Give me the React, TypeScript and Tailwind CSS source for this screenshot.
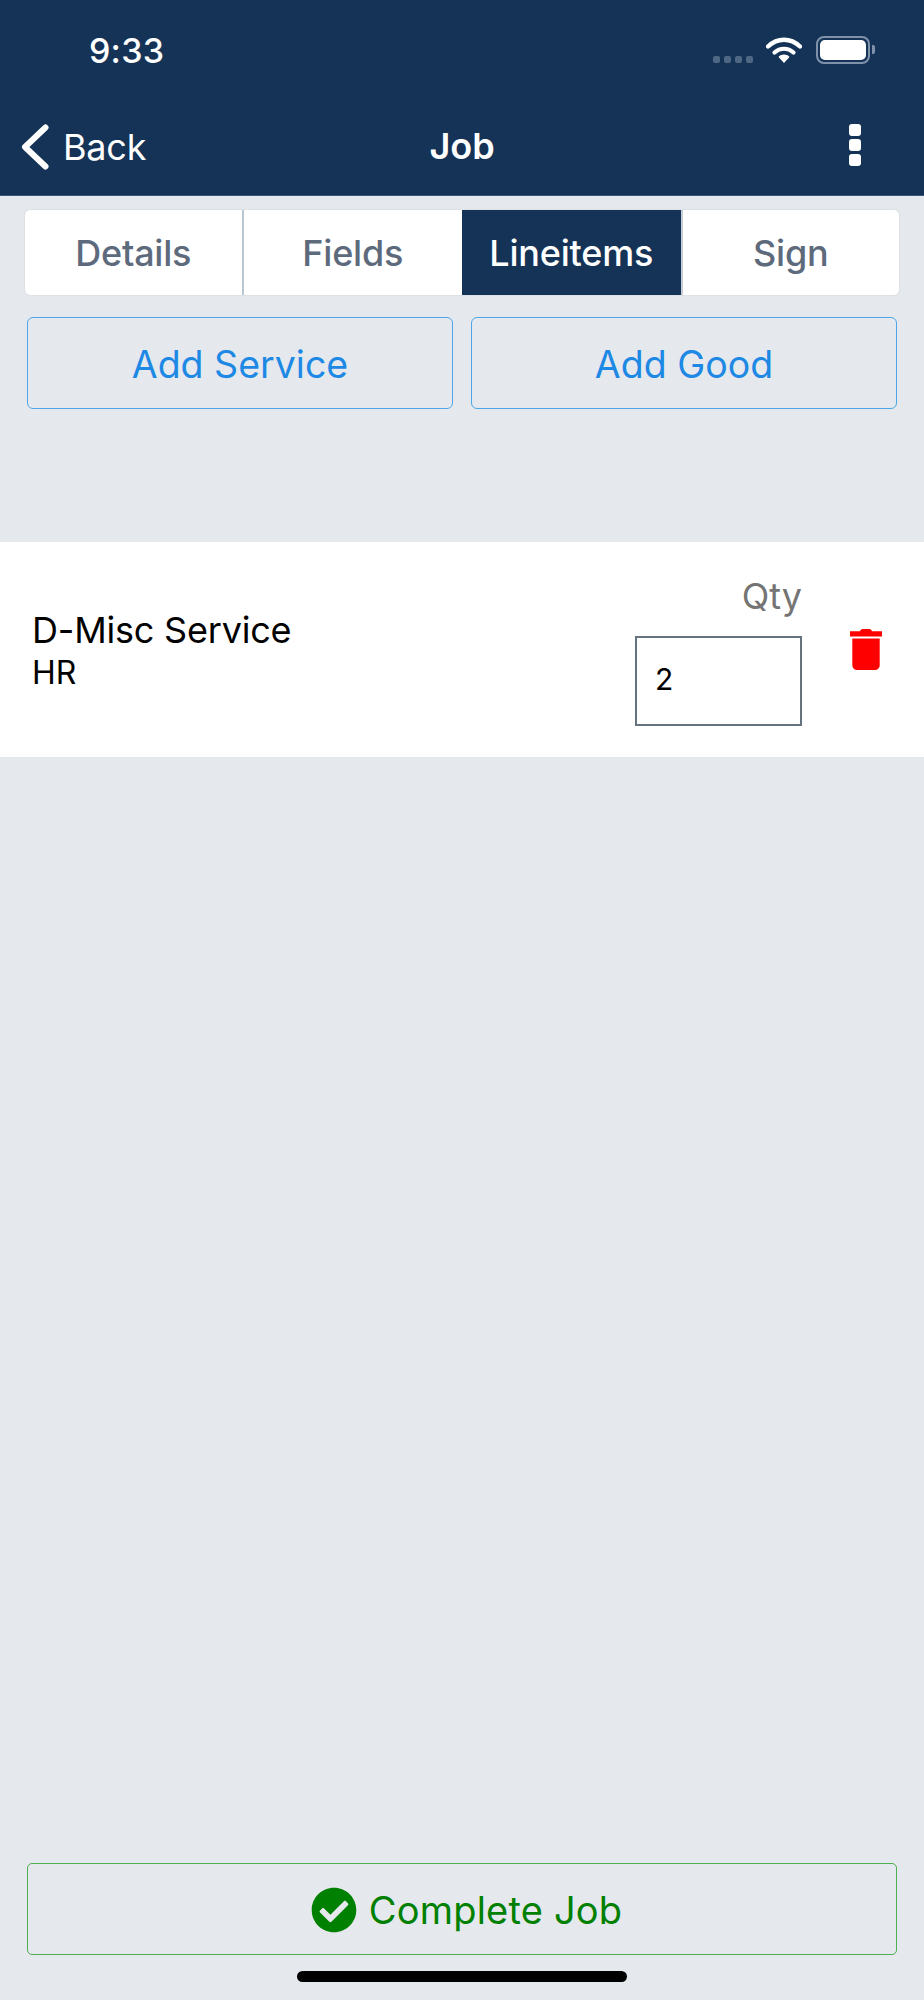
import { FaCheckCircle } from 'react-icons/fa';

const tabs = ['Details', 'Fields', 'Lineitems', 'Sign'];

function StatusBar() {
  return (
    <div className="flex h-[100px] items-start justify-between pl-[89px] pr-[49px] pt-[30px]">
      <span className="text-[34px] font-medium leading-[42px] tracking-[0.2px] text-white">9:33</span>
      <div className="flex items-start pt-[6px]">
        <div className="mt-[20px] flex gap-[4px]">
          {[0, 1, 2, 3].map((i) => (
            <div key={i} className="h-[7px] w-[7px] rounded-[2px] bg-[#4d6784]" />
          ))}
        </div>
        <svg className="ml-[13px] mt-[1px]" width="36" height="26" viewBox="0 0 36 26" fill="none">
          <path d="M2 9.5C11.5 0.5 24.5 0.5 34 9.5" stroke="white" strokeWidth="4.4" strokeLinecap="round" />
          <path d="M8.5 15.5C14 10.5 22 10.5 27.5 15.5" stroke="white" strokeWidth="4.2" strokeLinecap="round" />
          <path d="M12.5 20C15.5 16.8 20.5 16.8 23.5 20L18 26Z" fill="white" />
        </svg>
        <div className="ml-[14px] flex h-[28px] w-[54px] rounded-[8px] border-2 border-[#7f92a9] p-[2px]">
          <div className="flex-1 rounded-[5px] bg-white" />
        </div>
        <div className="ml-[2px] mt-[9px] h-[9px] w-[3px] rounded-r-[2px] bg-[#7f92a9]" />
      </div>
    </div>
  );
}

function NavBar() {
  return (
    <div className="relative flex h-[95px] items-start justify-between pl-[21px] pr-[63px] pt-[24px]">
      <div className="flex items-center">
        <svg width="28" height="46" viewBox="0 0 28 46" fill="none">
          <path d="M24.5 3.5L4 23L24.5 42.5" stroke="white" strokeWidth="6" strokeLinecap="round" strokeLinejoin="round" />
        </svg>
        <span className="ml-[14px] text-[36px] leading-[44px] tracking-[-0.2px] text-white">Back</span>
      </div>
      <span className="absolute left-0 right-0 top-[24px] text-center text-[36px] font-semibold leading-[44px] text-white">
        Job
      </span>
      <div className="flex flex-col gap-[3px]">
        <div className="h-[12px] w-[12px] rounded-[3px] bg-white" />
        <div className="h-[12px] w-[12px] rounded-[3px] bg-white" />
        <div className="h-[12px] w-[12px] rounded-[3px] bg-white" />
      </div>
    </div>
  );
}

function Tabs() {
  return (
    <div className="mx-[25px] mt-[14px] grid h-[85px] grid-cols-4 overflow-hidden rounded-[5px] bg-white shadow-[0_0_2px_rgba(0,0,0,0.12)]">
      {tabs.map((tab, i) => (
        <div
          key={tab}
          className={
            tab === 'Lineitems'
              ? 'flex items-center justify-center bg-[#143357] text-[36px] font-medium tracking-[-0.2px] text-white'
              : i === 0
                ? 'flex items-center justify-center border-r-2 border-[#b9c5d3] text-[36px] font-medium tracking-[-0.2px] text-[#5d6a7c]'
                : i === 1
                  ? 'flex items-center justify-center text-[36px] font-medium tracking-[-0.2px] text-[#5d6a7c]'
                  : 'flex items-center justify-center border-l-2 border-[#c5ccd6] text-[36px] font-medium tracking-[-0.2px] text-[#5d6a7c]'
          }
        >
          {tab}
        </div>
      ))}
    </div>
  );
}

function LineItem() {
  return (
    <div className="mt-[133px] flex h-[215px] items-start bg-white pl-[32px] pr-[42px]">
      <div className="mt-[66px] flex-1 text-black">
        <div className="text-[36px] leading-[44px] tracking-[-0.2px]">D-Misc Service</div>
        <div className="text-[32px] leading-[42px]">HR</div>
      </div>
      <div className="flex flex-col items-end pt-[32px]">
        <span className="text-[36px] leading-[44px] text-[#747474]">Qty</span>
        <input
          readOnly
          value="2"
          className="mt-[18px] h-[90px] w-[167px] border-2 border-[#67727f] px-[18px] pb-[5px] text-[30px] text-black outline-none"
        />
      </div>
      <svg className="ml-[48px] mt-[87px]" width="32" height="41" viewBox="0 0 32 41" fill="red">
        <path d="M10 2.2C10.6 0.8 11.5 0 13 0H19C20.5 0 21.4 0.8 22 2.2H32V7.5H0V2.2Z" />
        <path d="M2.3 9.5H29.7V36C29.7 38.8 27.8 41 25 41H7C4.2 41 2.3 38.8 2.3 36Z" />
      </svg>
    </div>
  );
}

export default function App() {
  return (
    <div className="flex h-[2000px] flex-col bg-[#e5e8ed] font-['Inter',sans-serif]">
      <div className="border-b border-[#3b5675] bg-[#143357]">
        <StatusBar />
        <NavBar />
      </div>
      <Tabs />
      <div className="mx-[27px] mt-[22px] flex gap-[18px]">
        <button className="h-[92px] flex-1 rounded-[6px] border border-[#4da6e8] pt-[4px] text-[37.5px] text-[#1e88e5]">
          Add Service
        </button>
        <button className="h-[92px] flex-1 rounded-[6px] border border-[#4da6e8] pt-[4px] text-[37.5px] text-[#1e88e5]">
          Add Good
        </button>
      </div>
      <LineItem />
      <div className="flex-1" />
      <button className="mx-[27px] flex h-[92px] items-center justify-center gap-[12px] rounded-[5px] border border-[#4caf50] pl-[9px] pt-[2px] text-[38px] tracking-[0.2px] text-[#008000]">
        <FaCheckCircle className="text-[46px]" />
        Complete Job
      </button>
      <div className="flex h-[45px] justify-center pt-[16px]">
        <div className="h-[11px] w-[330px] rounded-full bg-black" />
      </div>
    </div>
  );
}
